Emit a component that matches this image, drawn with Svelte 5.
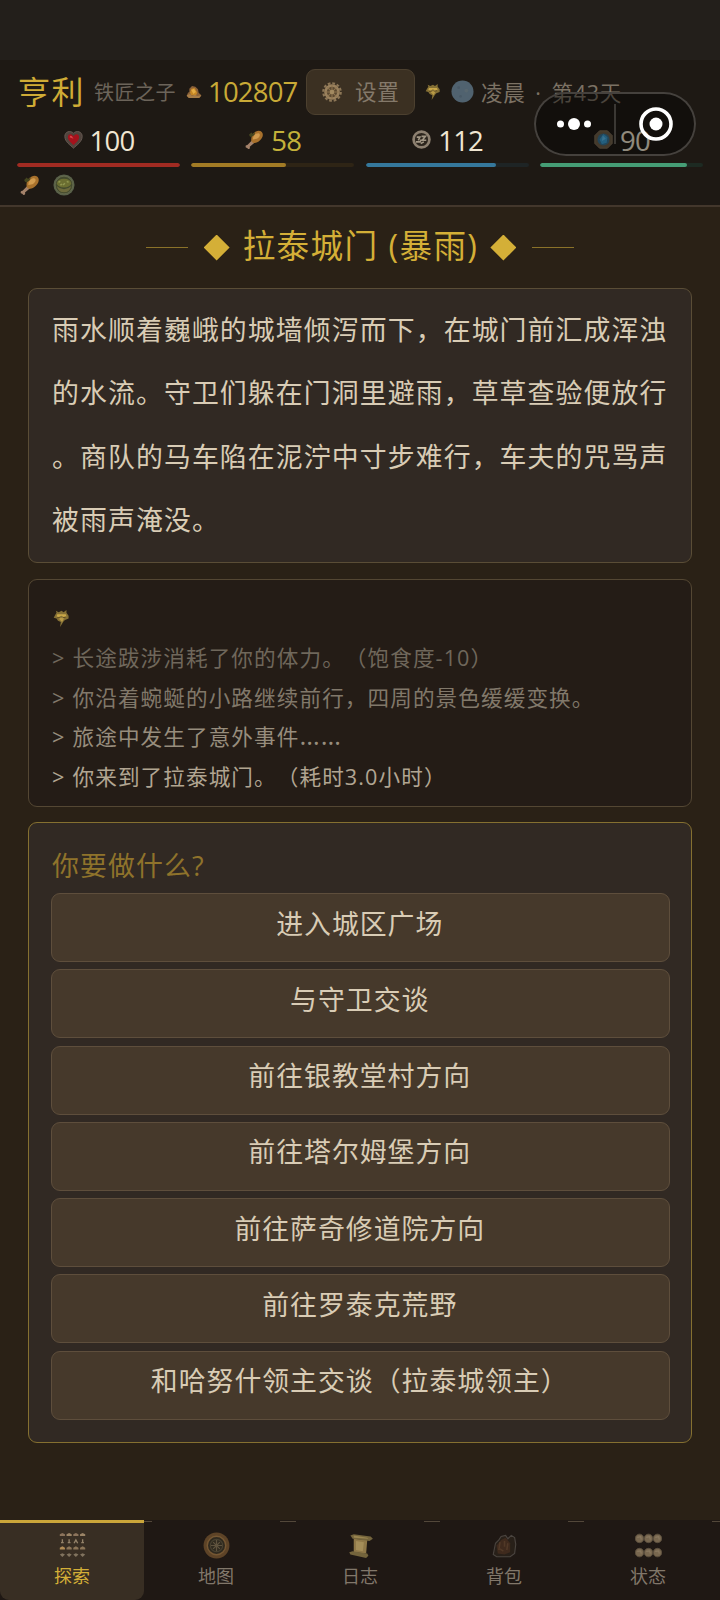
<script>
    const stats = [
        { icon: "heart", value: 100, percent: 100, color: "#a12b22", track: "#2b1b17", text: "#f0e6d2" },
        { icon: "food", value: 58, percent: 58, color: "#a27b25", track: "#2e2415", text: "#c4b13a" },
        { icon: "energy", value: 112, percent: 80, color: "#35789c", track: "#1e2425", text: "#f0e6d2" },
        { icon: "gem", value: 90, percent: 90, color: "#459d75", track: "#1d2a22", text: "#f0e6d2" },
    ];

    const logs = [
        { text: "长途跋涉消耗了你的体力。（饱食度-10）", color: "#6f675b" },
        { text: "你沿着蜿蜒的小路继续前行，四周的景色缓缓变换。", color: "#81786a" },
        { text: "旅途中发生了意外事件", more: "……", color: "#978d7d" },
        { text: "你来到了拉泰城门。（耗时3.0小时）", color: "#b1a592" },
    ];

    const actions = [
        "进入城区广场",
        "与守卫交谈",
        "前往银教堂村方向",
        "前往塔尔姆堡方向",
        "前往萨奇修道院方向",
        "前往罗泰克荒野",
        "和哈努什领主交谈（拉泰城领主）",
    ];

    const tabs = [
        { icon: "explore", label: "探索" },
        { icon: "compass", label: "地图" },
        { icon: "scroll", label: "日志" },
        { icon: "bag", label: "背包" },
        { icon: "people", label: "状态" },
    ];

    let active = $state("explore");
</script>

{#snippet icon(name, size)}
    <svg class="icon" viewBox="0 0 24 24" width={size} height={size}>
        {#if name === "heart"}
            <path d="M12 23C8 19 1 15 1 8C1 2 8 0 12 4C16 0 23 2 23 8C23 15 16 19 12 23Z" fill="#50443d" stroke="#70625a" stroke-width="1" />
            <path d="M12 19C9 16 5 13 5 9C5 5 9 4 12 8C15 4 19 5 19 9C19 13 15 16 12 19Z" fill="#a5121c" />
            <path d="M7 9Q8 6 10 8L12 11Z" fill="#d94448" />
        {:else if name === "food"}
            <path d="M9 13L3 19Q0 19 1 22Q3 22 4 24Q7 24 6 21L12 16Z" fill="#a4826a" />
            <path d="M8 14C7 7 11 2 17 1C24 1 24 9 19 13C15 17 10 18 8 14Z" fill="#a8712c" />
            <path d="M10 12C10 7 13 4 17 4C20 5 19 9 15 11Z" fill="#d19b4e" />
            <path d="M5 6L8 3L10 5L13 2L12 6L8 9L6 8Z" fill="#44451f" />
        {:else if name === "stew"}
            <circle cx="12" cy="12" r="11.5" fill="#59614a" />
            <circle cx="12" cy="12" r="9.6" fill="#434a2e" stroke="#6d7052" stroke-width=".7" />
            <path d="M4 13Q12 20 20 13Q18 20 12 20Q6 20 4 13Z" fill="#6d6a3c" />
            <ellipse cx="12" cy="10" rx="7.8" ry="4.8" fill="#6b6e31" />
            <path d="M6 9L8 8M11 12L13 10M15 8L17 9M8 12L10 11" stroke="#8f9650" stroke-width="1.6" />
        {:else if name === "coin"}
            <path d="M1 18L3 13L5 12V7L9 3L14 4L18 8L19 13L23 17L21 20H3Z" fill="#8b6138" />
            <path d="M6 13L8 7L13 6L17 13L15 17L8 17Z" fill="#c58625" />
            <path d="M8 9L12 7L15 12L11 15Z" fill="#e4ac44" />
            <path d="M1 17L6 15L9 18L13 16L17 18L23 17L20 21H4Z" fill="#a77d48" />
        {:else if name === "gear"}
            <circle cx="12" cy="12" r="10.5" fill="none" stroke="#8c7656" stroke-width="2.6" stroke-dasharray="3.3 2.2" />
            <circle cx="12" cy="12" r="7.8" fill="#5b4931" stroke="#9a815d" stroke-width="3.2" />
            <path d="M12 4V20M4 12H20M6.5 6.5L17.5 17.5M17.5 6.5L6.5 17.5" stroke="#8d744f" stroke-width="1.3" />
            <circle cx="12" cy="12" r="2.7" fill="#a28a61" />
        {:else if name === "bolt"}
            <path d="M5 4L4 1L8 3L12 1L15 3L19 0L19 4L22 8L22 12L17 14L15 16L10 24L11 17L7 15L5 12L1 11L3 7Z" fill="#857035" />
            <path d="M6 6H18L19 9L15 10L12 8L8 10L5 9Z" fill="#c9a748" />
            <path d="M7 11H16L13 17L10 14Z" fill="#b99a46" />
            <path d="M6 11H10M14 11L18 10" stroke="#5a4620" stroke-width="1.3" />
        {:else if name === "moon"}
            <circle cx="12" cy="12" r="11.5" fill="#50626f" />
            <circle cx="8" cy="8" r="1.4" fill="#495966" />
            <circle cx="16" cy="11" r="2" fill="#58676f" />
            <circle cx="10" cy="17" r="1.4" fill="#495966" />
        {:else if name === "energy"}
            <circle cx="12" cy="12" r="10" fill="#2c251d" stroke="#8d8070" stroke-width="3.4" />
            <path d="M6 9H10L8 13M12 8H17L13 13H18M5 15H10L12 12M11 17L15 15" fill="none" stroke="#a29785" stroke-width="2" />
        {:else if name === "gem"}
            <path d="M7 1H17L23 7V17L17 23H7L1 17V7Z" fill="#705f48" stroke="#8c7a60" />
            <circle cx="12" cy="12" r="7.6" fill="#3b7393" />
            <path d="M12 5L17 9L16 16L10 18L7 12Z" fill="#3b9fd3" />
            <path d="M11 7L15 11L10 14Z" fill="#60bdec" />
        {:else if name === "explore"}
            {#each [3, 9, 15, 21] as x, col}
                <path d="M{x - 2.3} 3.5V2L{x} .8L{x + 2.3} 2V3.5Z" fill={col % 2 ? "#9b8466" : "#8b735b"} />
                <path d={col === 2 ? "M13.4 10L15 7L16.6 10" : `M${x - 1.2} 9.4H${x + 1.2}M${x} 6.4V10`} fill="none" stroke="#94836a" stroke-width="1.2" />
                <path d="M{x - 2.3} 14L{x} 12.7L{x + 2.3} 14V15.6H{x - 2.3}Z" fill={col === 0 ? "#b08b56" : "#8b7558"} />
                <path d="M{x - 2.3} 20L{x} 18.8L{x + 2.3} 20L{x} 22.2Z" fill="#81735e" />
            {/each}
        {:else if name === "compass"}
            <circle cx="12" cy="12" r="11.5" fill="#5d4327" />
            <circle cx="12" cy="12" r="8.2" fill="#302a1f" stroke="#755733" stroke-width="1.3" />
            <circle cx="12" cy="12" r="5.5" fill="none" stroke="#484131" />
            <path d="M12 7V17M7 12H17M9 9L15 15M15 9L9 15" stroke="#5f533e" stroke-width="1.1" />
        {:else if name === "scroll"}
            <path d="M6 6L18 7L17 19L6 18Z" fill="#8f7848" />
            <path d="M3 3L6 2L21 4L23 6L20 8L5 6Z" fill="#74643c" />
            <path d="M6 3L18 5L19 6L6 5Z" fill="#9a8550" />
            <path d="M2 18L5 17L18 19L19 21L17 23L3 20Z" fill="#74643c" />
            <path d="M8 8L15 9L14 17L8 16Z" fill="#a48d58" />
        {:else if name === "bag"}
            <path d="M2 20L4 10L7 7L9 4L13 3L15 6L18 3L21 5L22 11L21 19L17 22H5Z" fill="#282019" stroke="#4a443f" stroke-width="1" />
            <path d="M5 12L9 7L13 5L17 10L17 18L12 20L6 19Z" fill="#3f2a1d" />
            <path d="M8 9L7 16M12 8V13M15 10L14 16M8 15L11 17" stroke="#513927" stroke-width="1.4" />
        {:else if name === "people"}
            {#each [5.7, 18.3] as y}
                {#each [4, 12, 20] as x}
                    <circle cx={x} cy={y} r="3.8" fill="#78674f" stroke="#5a4e3d" stroke-width=".8" />
                    <path d="M{x - 2} {y - 1}L{x + 1} {y - 1.5}L{x + 1.6} {y + 1}" fill="none" stroke="#8a7960" stroke-width="1.1" />
                {/each}
            {/each}
        {/if}
    </svg>
{/snippet}

<div class="screen">
    <header>
        <div class="profile">
            <span class="name">亨利</span>
            <span class="title">铁匠之子</span>
            <span class="coins">{@render icon("coin", 16)}<b>102807</b></span>
            <button class="settings">{@render icon("gear", 20)}<span>设置</span></button>
            <span class="weather">{@render icon("bolt", 16)}</span>
            <span class="time">{@render icon("moon", 23)}<span>凌晨 · 第43天</span></span>
        </div>

        <div class="stats">
            {#each stats as stat}
                <div class="stat">
                    <div class="stat-value" style:color={stat.text}>
                        {@render icon(stat.icon, 19)}
                        <span>{stat.value}</span>
                    </div>
                    <div class="track" style:background={stat.track}>
                        <div class="fill" style:width="{stat.percent}%" style:background={stat.color}></div>
                    </div>
                </div>
            {/each}
        </div>

        <div class="effects">
            {@render icon("food", 20)}
            {@render icon("stew", 22)}
        </div>
    </header>

    <div class="capsule">
        <svg viewBox="0 0 162 64" width="162" height="64">
            <circle cx="26.5" cy="32" r="3.5" fill="#fff" />
            <circle cx="40" cy="32" r="6" fill="#fff" />
            <circle cx="53.5" cy="32" r="3.5" fill="#fff" />
            <path d="M81 12V52" stroke="#3b3834" stroke-width="2" />
            <circle cx="122" cy="32" r="15" fill="none" stroke="#fff" stroke-width="3.6" />
            <circle cx="122" cy="32" r="6.5" fill="#fff" />
        </svg>
    </div>

    <main>
        <h1>
            <i class="line"></i>
            <i class="diamond"></i>
            <span>拉泰城门 (暴雨)</span>
            <i class="diamond"></i>
            <i class="line"></i>
        </h1>

        <section class="story">雨水顺着巍峨的城墙倾泻而下，在城门前汇成浑浊<br />的水流。守卫们躲在门洞里避雨，草草查验便放行<br />。商队的马车陷在泥泞中寸步难行，车夫的咒骂声<br />被雨声淹没。</section>

        <section class="log">
            <div class="log-icon">{@render icon("bolt", 17)}</div>
            {#each logs as log}
                <p style:color={log.color}><span class="arrow">&gt;</span>{log.text}{#if log.more}<span class="more">{log.more}</span>{/if}</p>
            {/each}
        </section>

        <section class="choices">
            <h2>你要做什么?</h2>
            {#each actions as action}
                <button>{action}</button>
            {/each}
        </section>
    </main>

    <nav>
        {#each tabs as tab}
            <button class:active={active === tab.icon} onclick={() => (active = tab.icon)}>
                {@render icon(tab.icon, 27)}
                <span>{tab.label}</span>
            </button>
        {/each}
    </nav>
</div>

<style>
    :global(body) {
        margin: 0;
        background: #2a2116;
    }

    .screen {
        position: relative;
        display: flex;
        flex-direction: column;
        box-sizing: border-box;
        width: 720px;
        height: 1600px;
        padding-top: 60px;
        overflow: hidden;
        background: linear-gradient(#231f1b 60px, #2a2116 60px);
        font-family: "Open Sans", "Noto Sans CJK SC", sans-serif;
        text-spacing-trim: space-all;
        color: #d9ccb5;
    }

    button {
        font: inherit;
        color: inherit;
        margin: 0;
        padding: 0;
        cursor: pointer;
    }

    .icon {
        display: block;
        flex: none;
    }

    header {
        box-sizing: border-box;
        height: 147px;
        padding: 9px 17px 0;
        background: #1e1914;
        border-bottom: 2px solid #43372c;
        white-space: nowrap;
    }

    .profile {
        display: flex;
        align-items: center;
        height: 45px;
    }

    .name {
        width: 76px;
        padding-left: 1px;
        font-size: 32px;
        letter-spacing: 1.4px;
        line-height: 45px;
        color: #d0ac36;
    }

    .title {
        width: 92px;
        font-size: 20px;
        letter-spacing: 0.5px;
        color: #6c645a;
    }

    .coins {
        display: flex;
        align-items: center;
        gap: 6px;
        width: 120px;
    }

    .coins b {
        font-size: 27.5px;
        font-weight: 400;
        letter-spacing: -0.8px;
        line-height: 45px;
        color: #c9aa37;
    }

    .settings {
        display: flex;
        align-items: center;
        gap: 13px;
        box-sizing: border-box;
        width: 109px;
        height: 46px;
        padding: 0 0 0 15px;
        background: #3b3022;
        border: 1.5px solid #4c402f;
        border-radius: 9px;
        font-size: 21.5px;
        letter-spacing: 0.8px;
        line-height: 42px;
        color: #84796a;
    }

    .weather {
        width: 26px;
        margin-left: 10px;
    }

    .time {
        display: flex;
        align-items: center;
        gap: 7px;
        font-size: 21.5px;
        letter-spacing: 0.7px;
        word-spacing: 3.6px;
        color: #7c7264;
    }

    .stats {
        display: grid;
        grid-template-columns: repeat(4, 163px);
        gap: 11.3px;
    }

    .stat-value {
        display: flex;
        align-items: center;
        justify-content: center;
        gap: 7px;
        height: 48.5px;
        padding: 2px 0 0 1px;
        box-sizing: border-box;
        font-size: 27.5px;
        letter-spacing: -0.8px;
    }

    .stat-value span {
        line-height: 42px;
        padding-top: 3px;
    }

    .track {
        height: 4.5px;
        border-radius: 3px;
        overflow: hidden;
    }

    .fill {
        height: 100%;
        border-radius: 3px;
    }

    .effects {
        display: flex;
        align-items: center;
        gap: 13px;
        height: 36px;
        padding-left: 3px;
    }

    .capsule {
        position: absolute;
        left: 534px;
        top: 92px;
        box-sizing: border-box;
        width: 162px;
        height: 64px;
        border-radius: 32px;
        background: rgba(0, 0, 0, 0.4);
        box-shadow: inset 0 0 0 2px #45413d;
    }

    main {
        flex: 1;
        padding: 0 28px;
    }

    h1 {
        display: flex;
        align-items: center;
        justify-content: center;
        height: 81px;
        margin: 0;
        font-size: 32.6px;
        font-weight: 400;
        letter-spacing: 1.4px;
        color: #d4af37;
    }

    h1 span {
        margin: 0 12px 0 13px;
        padding-bottom: 3px;
        line-height: 72px;
        white-space: nowrap;
    }

    .line {
        width: 42px;
        height: 1px;
        margin: 0 16px;
        background: #8a7229;
    }

    .diamond {
        width: 26px;
        height: 26px;
        background: #d4af37;
        clip-path: polygon(50% 0, 100% 50%, 50% 100%, 0 50%);
    }

    section {
        box-sizing: border-box;
        border: 1.5px solid #5a4d36;
        border-radius: 9px;
    }

    .story {
        height: 275px;
        padding: 9px 23px;
        background: #312923;
        font-size: 26.88px;
        letter-spacing: 1.1px;
        line-height: 63.4px;
        white-space: nowrap;
    }

    .log {
        height: 228px;
        margin-top: 16px;
        padding: 30px 23px 0;
        background: #241c16;
        border-color: #544733;
        font-size: 21.6px;
        letter-spacing: 1.1px;
        white-space: nowrap;
    }

    .log-icon {
        height: 28px;
        padding-left: 1px;
    }

    .log p {
        margin: 0;
        line-height: 39.6px;
    }

    .arrow {
        display: inline-block;
        width: 20.5px;
    }

    .more {
        font-size: 26px;
        line-height: 1;
    }

    .choices {
        display: flex;
        flex-direction: column;
        height: 621px;
        margin-top: 15px;
        padding: 15px 21px 0 22px;
        background: #312923;
        border: 1.5px solid #857030;
    }

    h2 {
        height: 55px;
        margin: 0 0 0 1px;
        font-size: 26.88px;
        font-weight: 400;
        letter-spacing: 1.1px;
        line-height: 55px;
        color: #8f732b;
    }

    .choices button {
        box-sizing: border-box;
        width: 618.5px;
        height: 69px;
        margin-bottom: 7.3px;
        padding-right: 1px;
        padding-bottom: 8px;
        flex: none;
        background: #46392b;
        border: 1.5px solid #5e4e3c;
        border-radius: 9px;
        font-size: 26.88px;
        letter-spacing: 0.98px;
        line-height: 56px;
    }

    nav {
        display: flex;
        height: 80px;
        background: #1f1814;
    }

    nav button {
        display: flex;
        flex-direction: column;
        align-items: center;
        box-sizing: border-box;
        width: 144px;
        padding-top: 12px;
        border: 0;
        background:
            linear-gradient(#52473a, #52473a) 0 1px / 8px 1px no-repeat,
            linear-gradient(#52473a, #52473a) 100% 1px / 8px 1px no-repeat;
        color: #81776a;
    }

    nav span {
        margin-top: 4px;
        font-size: 18px;
        line-height: 26px;
    }

    nav .active {
        background: linear-gradient(#cba63a, #cba63a) 0 0 / 100% 3px no-repeat, #382e23;
        border-radius: 0 0 9px 9px;
        color: #d4af37;
    }
</style>
